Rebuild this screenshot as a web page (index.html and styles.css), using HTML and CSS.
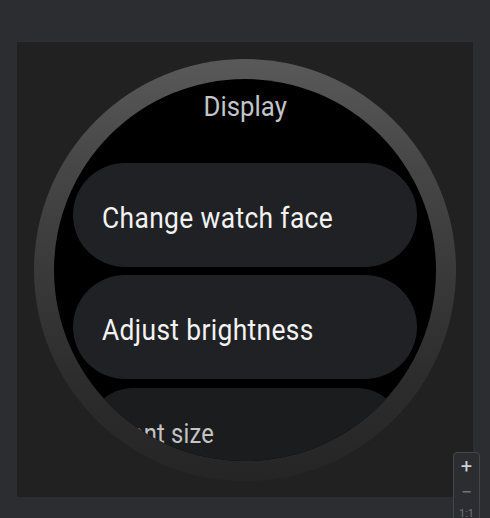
FILE: index.html
```html
<!DOCTYPE html>
<html lang="en">
<head>
  <meta charset="UTF-8">
  <title>Wear preview</title>
  <link rel="stylesheet" href="styles.css">
</head>
<body>
  <div class="preview">
    <div class="watch">
      <div class="screen">
        <div class="title"><span>Display</span></div>
        <div class="chip"><span>Change watch face</span></div>
        <div class="chip"><span>Adjust brightness</span></div>
        <div class="chip chip-far"><span>Font size</span></div>
      </div>
    </div>
  </div>

  <!-- zoom controls -->
  <div class="zoom">
    <span class="zoom-btn">+</span>
    <span class="zoom-btn off">&minus;</span>
    <span class="zoom-btn ratio">1:1</span>
  </div>
</body>
</html>
```

FILE: styles.css
```css
body {
  margin: 0;
  background: #2b2d30;
  font-family: Roboto, "Liberation Sans", sans-serif;
  height: 518px;
  overflow: hidden;
}

.preview {
  margin: 42px 17px 0;
  height: 455px;
  padding-top: 17px;
  box-sizing: border-box;
  background: #212121;
  display: flex;
  justify-content: center;
  overflow: hidden;
}

.watch {
  width: 422px;
  height: 422px;
  padding: 20px;
  box-sizing: border-box;
  border-radius: 50%;
  background: linear-gradient(to bottom, #595959 0%, #474747 25%, #3a3a3a 50%, #2d2d2d 75%, #252525 100%);
}

.screen {
  width: 382px;
  height: 382px;
  border-radius: 50%;
  background: #000;
  overflow: hidden;
  display: flex;
  flex-direction: column;
  align-items: center;
}

/* wear font is a narrow one, squeeze roboto a bit */
.title span,
.chip span {
  display: inline-block;
  white-space: nowrap;
}

.title {
  margin-top: 12px;
  font-size: 28px;
  line-height: 32px;
  color: #c2c5c9;
}

.title span {
  transform: scaleX(0.92);
}

.chip {
  flex: none;
  width: 344px;
  height: 104px;
  margin-top: 40px;
  padding: 4px 0 0 29px;
  box-sizing: border-box;
  border-radius: 52px;
  background: #202124;
  color: #f2f2f2;
  font-size: 30px;
  letter-spacing: 0.4px;
  display: flex;
  align-items: center;
}

.chip span {
  transform: scaleX(0.88);
  transform-origin: left center;
}

.chip + .chip {
  margin-top: 8px;
}

.chip.chip-far {
  margin-top: 9px;
  width: 316px;
  height: 92px;
  border-radius: 46px;
  padding-left: 30px;
  padding-top: 0;
  font-size: 27px;
  letter-spacing: 0.2px;
  color: #c4c4c4;
  background: #1b1c1e;
}

.zoom {
  position: absolute;
  left: 453px;
  top: 452px;
  width: 27px;
  height: 80px;
  border: 1px solid #44464b;
  border-radius: 4px;
  background: #2b2d30;
  display: flex;
  flex-direction: column;
  align-items: center;
  box-sizing: border-box;
}

.zoom-btn {
  color: #ced0d6;
  font-size: 20px;
  line-height: 26px;
  height: 26px;
}

.zoom-btn.off {
  color: #6f737a;
}

.zoom-btn.ratio {
  font-size: 11px;
  color: #6f737a;
  line-height: 18px;
  height: 18px;
}
```
